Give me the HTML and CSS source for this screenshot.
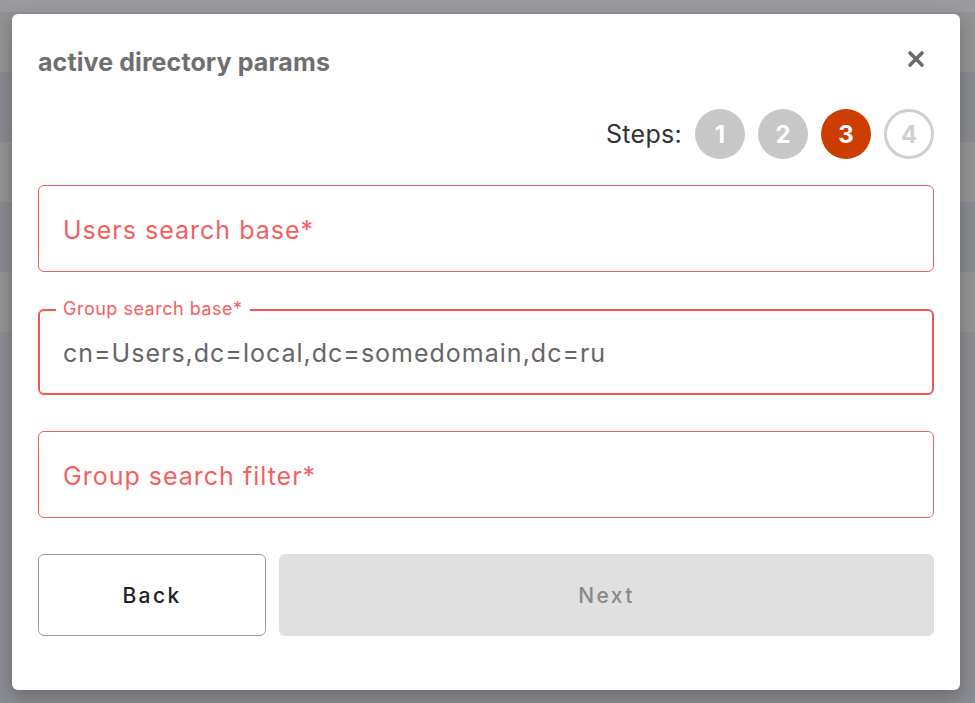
FILE: index.html
```html
<!DOCTYPE html>
<html lang="en">
<head>
    <meta charset="UTF-8">
    <title>Active directory params</title>
    <link rel="stylesheet" href="styles.css">
</head>
<body>
    <!-- page behind the dimmed overlay -->
    <div class="page-rows">
        <div class="page-row row-top"></div>
        <div class="page-row row-light"></div>
        <div class="page-row row-dark"></div>
        <div class="page-row row-light"></div>
        <div class="page-row row-dark"></div>
        <div class="page-row row-light"></div>
        <div class="page-row row-rest"></div>
    </div>

    <div class="modal-wrapper">
        <div class="modal">
            <div class="modal-head">
                <div class="modal-title">active directory params</div>
                <button class="modal-close" type="button" aria-label="close">
                    <svg width="18" height="18" viewBox="0 0 18 18">
                        <path d="M3 3 L15 15 M15 3 L3 15" stroke="#6b6b6b" stroke-width="3.6" stroke-linecap="round"/>
                    </svg>
                </button>
            </div>

            <div class="steps">
                <span class="steps-label">Steps:</span>
                <span class="step step-done">1</span>
                <span class="step step-done">2</span>
                <span class="step step-current">3</span>
                <span class="step step-next">4</span>
            </div>

            <div class="field">
                <input type="text" class="field-input" placeholder="Users search base*">
            </div>

            <div class="field field-active">
                <label class="field-legend">Group search base*</label>
                <input type="text" class="field-input" value="cn=Users,dc=local,dc=somedomain,dc=ru">
            </div>

            <div class="field">
                <input type="text" class="field-input" placeholder="Group search filter*">
            </div>

            <div class="actions">
                <button class="btn btn-back" type="button">Back</button>
                <button class="btn btn-next" type="button" disabled>Next</button>
            </div>
        </div>
    </div>
</body>
</html>
```

FILE: styles.css
```css
* {
    margin: 0;
    padding: 0;
    box-sizing: border-box;
}
body {
    width: 975px;
    height: 703px;
    overflow: hidden;
    position: relative;
    background: #8b8c91;
    font-family: Inter, "Noto Sans", sans-serif;
}
.page-rows {
    display: flex;
    flex-direction: column;
}
.row-top {
    height: 12px;
    background: #9a9b9f;
}
.row-light {
    height: 60px;
    background: #939394;
}
.row-dark {
    height: 70px;
    background: #8a8b90;
}
.row-rest {
    height: 400px;
    background: #8b8c91;
}
.modal-wrapper {
    position: absolute;
    top: 14px;
    left: 12px;
}
.modal {
    width: 948px;
    height: 676px;
    background: #fff;
    border-radius: 6px;
    box-shadow: 0 6px 18px rgba(0, 0, 0, 0.25);
    padding: 0 26px;
    display: flex;
    flex-direction: column;
}
.modal-head {
    display: flex;
    justify-content: space-between;
    align-items: center;
    height: 96px;
}
.modal-title {
    font-size: 25px;
    font-weight: 700;
    color: #6f6f6f;
    letter-spacing: 0.1px;
    margin-top: -1px;
}
.modal-close {
    border: 0;
    background: none;
    margin-right: 9px;
    margin-top: -6px;
    display: flex;
}
.steps {
    display: flex;
    justify-content: flex-end;
    align-items: center;
    gap: 13px;
    margin-top: -1px;
}
.steps-label {
    font-size: 25px;
    letter-spacing: 0.3px;
    color: #333;
}
.step {
    width: 50px;
    height: 50px;
    border-radius: 50%;
    display: flex;
    align-items: center;
    justify-content: center;
    font-size: 24px;
    font-weight: 700;
    color: #fff;
}
.step-done {
    background: #c7c7c7;
}
.step-current {
    background: #cd3d02;
}
.step-next {
    border: 3px solid #d0d0d0;
    color: #d0d0d0;
}
.field {
    height: 87px;
    border: 1px solid #f25e5e;
    border-radius: 6px;
    margin-top: 26px;
    display: flex;
    align-items: center;
}
.field + .field {
    margin-top: 37px;
}
.field-active {
    position: relative;
    border: 2px solid #f55555;
    height: 86px;
}
.field-active + .field {
    margin-top: 36px;
}
/* label sits over the top border, like a fieldset legend */
.field-legend {
    position: absolute;
    top: -13px;
    left: 16px;
    font-size: 18px;
    line-height: 22px;
    color: #f55f5f;
    background: #fff;
    padding: 0 7px 0 7px;
    letter-spacing: 0.5px;
}
.field-input {
    width: 100%;
    border: 0;
    outline: 0;
    background: transparent;
    font-family: Inter, "Noto Sans", sans-serif;
    font-size: 25px;
    letter-spacing: 1px;
    padding: 0 0 0 24px;
    color: #666;
    margin-top: 2px;
}
.field-active .field-input {
    padding-left: 23px;
    margin-top: 1px;
}
.field-input::placeholder {
    color: #f55f5f;
    opacity: 1;
}
.actions {
    display: flex;
    gap: 13px;
    margin-top: 36px;
}
.btn {
    height: 82px;
    border-radius: 6px;
    font-family: Inter, "Noto Sans", sans-serif;
    font-size: 21px;
    letter-spacing: 2.4px;
    font-weight: 500;
}
.btn-back {
    width: 228px;
    border: 1px solid #9b9b9b;
    background: #fff;
    color: #222;
}
.btn-next {
    flex: 1;
    border: 0;
    background: #e0e0e0;
    color: #8a8a8a;
}
```
